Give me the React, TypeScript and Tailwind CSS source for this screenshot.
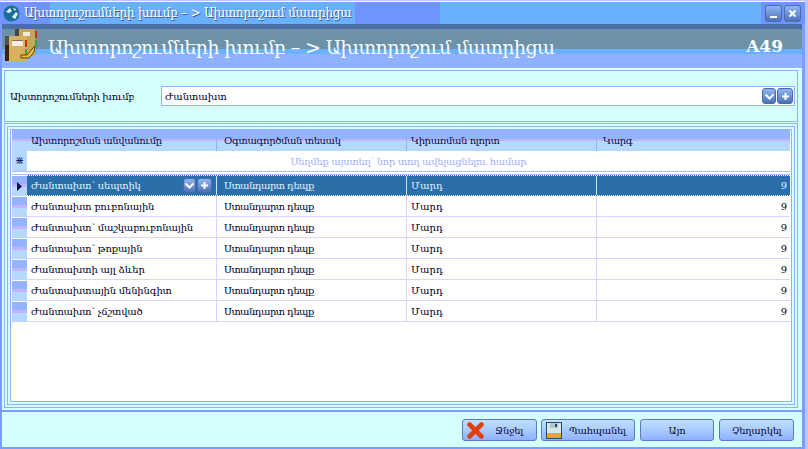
import type { ReactNode } from "react";

const rows = [
  "Ժանտախտ՝ սեպտիկ",
  "Ժանտախտ բուբոնային",
  "Ժանտախտ՝ մաշկաբուբոնային",
  "Ժանտախտ՝ թոքային",
  "Ժանտախտի այլ ձևեր",
  "Ժանտախտային մենինգիտ",
  "Ժանտախտ՝ չճշտված",
];

const headers = [
  { label: "Ախտորոշման անվանումը", cls: "w-[190px] border-r border-r-[#8fb2ff] pl-[4px]" },
  { label: "Օգտագործման տեսակ", cls: "w-[190px] border-r border-r-[#8fb2ff] pl-[7px]" },
  { label: "Կիրառման ոլորտ", cls: "w-[190px] border-r border-r-[#8fb2ff] pl-[4px]" },
  { label: "Կարգ", cls: "flex-1 pl-[6px]" },
];

function GlossButton({ kind, size = "w-[14px] h-[16px]" }: { kind: "down" | "plus" | "min" | "close"; size?: string }) {
  return (
    <span className={`${size} flex items-center justify-center rounded-[3px] border border-[#4a6aa8] bg-[linear-gradient(#8fb4f0,#6f95d8_50%,#4a70b8)]`}>
      <svg width="11" height="11" viewBox="0 0 11 11" fill="none" stroke="#fff" strokeWidth="2">
        {kind === "down" && <path d="M1.5 3.5 5.5 7.5 9.5 3.5" />}
        {kind === "plus" && <path d="M5.5 2v7M2 5.5h7" />}
        {kind === "min" && <path d="M2 9h7" />}
        {kind === "close" && <path d="M2.5 2.5l6 6M8.5 2.5l-6 6" />}
      </svg>
    </span>
  );
}

function FolderIcon() {
  return (
    <svg width="32" height="32" viewBox="0 0 32 32" shapeRendering="crispEdges">
      <rect x="10" y="0" width="20" height="27" fill="#c8a458" />
      <rect x="10" y="0" width="4" height="7" fill="#444450" />
      <rect x="18" y="3" width="7" height="4" fill="#f0e8d8" />
      <rect x="30" y="2" width="2" height="7" fill="#c83010" />
      <rect x="30" y="11" width="2" height="7" fill="#40a040" />
      <rect x="0" y="7" width="22" height="25" fill="#d8b060" />
      <rect x="0" y="7" width="4" height="9" fill="#505058" />
      <rect x="0" y="16" width="4" height="16" fill="#3a2410" />
      <rect x="7" y="11" width="11" height="6" fill="#f8ece0" />
      <rect x="7" y="11" width="11" height="1" fill="#807060" />
      <rect x="20" y="11" width="2" height="7" fill="#c83010" />
      <rect x="20" y="20" width="2" height="7" fill="#40a040" />
      <path d="M16 29h8l5-6 1-6-3 3-5 6h-6z" fill="#e8c030" stroke="#5a4408" strokeWidth="1" shapeRendering="auto" />
    </svg>
  );
}

function FrameBox({ children }: { children: ReactNode }) {
  return <div className="flex min-h-0 flex-1 flex-col border border-[#8fb2ff] p-[2px]">{children}</div>;
}

function FootButton({ width, icon, label, textClass }: { width: string; icon?: ReactNode; label: string; textClass?: string }) {
  return (
    <div className={`${width} flex h-[22px] items-center rounded-[3px] border border-[#5f78c0] bg-[linear-gradient(#c0e0ff,#a8ccff_50%,#8fb0ff)] text-[10px] tracking-[-0.3px] text-[#0a0a40]`}>
      {icon}
      <span className={textClass ?? "flex-1 text-center"}>{label}</span>
    </div>
  );
}

export default function App() {
  return (
    <div className="flex h-[449px] w-[808px] flex-col overflow-hidden bg-[#b9c9ff] font-['DejaVu_Serif',serif]">
      {/* title bar */}
      <div className="mt-[1px] flex h-[23px] w-[805px] items-center border-t border-t-white bg-[linear-gradient(90deg,#6f93ff_50px,#69b0ff_50px,#69b0ff_355px,#6f93ff_355px,#6f93ff_440px,#69b0ff_440px,#69b0ff_761px,#6f93ff_761px)] pr-[4px] pl-[3px]">
        <svg width="17" height="17" viewBox="0 0 17 17">
          <circle cx="8.5" cy="8.5" r="8" fill="#1b6e9a" />
          <path d="M3 7l4-4 2 3-3 2zM9 12l4-5 2 2-3 5zM10 3l3 1-1 2z" fill="#e8f4ff" />
        </svg>
        <span className="ml-[4px] text-[12px] tracking-[-0.2px] whitespace-nowrap text-white [text-shadow:1px_1px_0_#3c5a90]">
          Ախտորոշումների խումբ – &gt; Ախտորոշում մատրիցա
        </span>
        <div className="ml-auto flex gap-[2px]">
          <GlossButton kind="min" size="w-[17px] h-[17px]" />
          <GlossButton kind="close" size="w-[17px] h-[17px]" />
        </div>
      </div>

      <div className="flex min-h-0 w-[805px] flex-1 flex-col border-r-[3px] border-b-[2px] border-l-[2px] border-[#7b9dff]">
        {/* heading band */}
        <div className="flex h-[44px] shrink-0 bg-[linear-gradient(#4a6ea8_5px,#6d92a8_5px,#6d92a8_25px,#69b0ff_25px,#69b0ff_30px,#8fb2ff_30px)] pr-[19px] pl-[3px]">
          <div className="mt-[5px] shrink-0">
            <FolderIcon />
          </div>
          <span className="mt-[9px] ml-[11px] text-[19px] leading-[28px] tracking-[-0.6px] whitespace-nowrap text-[#f8fdff]">
            Ախտորոշումների խումբ – &gt; Ախտորոշում մատրիցա
          </span>
          <span className="mt-[8px] ml-auto text-[17px] leading-[28px] font-bold text-[#f8fdff]">A49</span>
        </div>

        {/* body */}
        <div className="flex min-h-0 flex-1 flex-col bg-[#d5ffff]">
          <div className="flex min-h-0 flex-1 flex-col border-t border-t-white pt-[1px] pr-[4px] pl-[2px]">
            <div className="flex h-[52px] shrink-0 items-center border border-[#8fb2ff] pr-[2px] pl-[5px] text-[10px] text-[#000028]">
              <span className="w-[151px] tracking-[-0.35px] whitespace-nowrap">Ախտորոշումների խումբ</span>
              <div className="flex h-[20px] flex-1 items-center border border-[#8fb2ff] bg-white pr-[1px] pl-[3px]">
                <span>Ժանտախտ</span>
                <div className="ml-auto flex gap-[1px]">
                  <GlossButton kind="down" />
                  <GlossButton kind="plus" size="w-[16px] h-[16px]" />
                </div>
              </div>
            </div>

            <div className="mt-[1px] flex h-[285px] min-h-0 flex-col">
              <FrameBox>
                <FrameBox>
                  <div className="flex min-h-0 flex-1 flex-col border border-[#8fb2ff] bg-white px-[1px] pb-[1px]">
                    {/* header */}
                    <div className="flex h-[21px] shrink-0 text-[10px] tracking-[-0.4px] whitespace-nowrap text-[#0c0c44]">
                      <div className="w-[15px] bg-[linear-gradient(#94b4ff_9px,#c0b4ff_9px,#c0b4ff_11px,#b4d8ff_11px)]" />
                      {headers.map((h) => (
                        <div
                          key={h.label}
                          className={`${h.cls} flex items-center bg-[linear-gradient(#94b4ff_9px,#c0b4ff_9px,#c0b4ff_11px,#b4d8ff_11px)]`}
                        >
                          {h.label}
                        </div>
                      ))}
                    </div>
                    {/* new row */}
                    <div className="flex h-[21px] shrink-0 border-b border-b-[#a8c4ff]">
                      <div className="flex w-[15px] items-center justify-center bg-[#b4d8ff] text-[11px] text-[#10186c]">⋇</div>
                      <div className="flex flex-1 items-center justify-center text-[10px] tracking-[-0.3px] whitespace-nowrap text-[#a4b0ff]">
                        Սեղմեք այստեղ՝ նոր տող ավելացնելու համար
                      </div>
                    </div>
                    <div className="h-[3px] shrink-0 border-b border-b-[#a8c4ff]" />

                    {rows.map((r, i) => (
                      <div key={r} className="flex h-[21px] shrink-0">
                        <div className="flex w-[15px] items-center justify-center border-t border-t-white bg-[linear-gradient(#94b4ff_8px,#c0b4ff_8px,#c0b4ff_11px,#b4d8ff_11px)]">
                          {i === 0 && (
                            <svg width="5" height="9" viewBox="0 0 5 9">
                              <path d="M0 0l5 4.5L0 9z" fill="#0a1050" />
                            </svg>
                          )}
                        </div>
                        <div
                          className={`flex flex-1 text-[10px] whitespace-nowrap ${i === 0 ? "border-y border-dotted border-white bg-[#2a6eaa] text-[#e0f2ff]" : "border-b border-b-[#d8d4ff] bg-white text-[#000028]"}`}
                        >
                          <div className={`flex w-[190px] items-center border-r pr-[4px] pl-[4px] tracking-[-0.2px] ${i === 0 ? "border-r-[#d0e4ff]" : "border-r-[#d8d4ff]"}`}>
                            <span>{r}</span>
                            {i === 0 && (
                              <div className="ml-auto flex gap-[1px]">
                                <GlossButton kind="down" size="w-[13px] h-[15px]" />
                                <GlossButton kind="plus" size="w-[15px] h-[15px]" />
                              </div>
                            )}
                          </div>
                          <div className={`flex w-[190px] items-center border-r pl-[7px] tracking-[-0.6px] ${i === 0 ? "border-r-[#d0e4ff]" : "border-r-[#d8d4ff]"}`}>Ստանդարտ դեպք</div>
                          <div className={`flex w-[190px] items-center border-r pl-[4px] ${i === 0 ? "border-r-[#d0e4ff]" : "border-r-[#d8d4ff]"}`}>Մարդ</div>
                          <div className="flex flex-1 items-center justify-end pr-[3px]">9</div>
                        </div>
                      </div>
                    ))}
                  </div>
                </FrameBox>
              </FrameBox>
            </div>
          </div>

          {/* footer */}
          <div className="flex h-[37px] shrink-0 items-center justify-end gap-[5px] border-t-[2px] border-t-[#7b9dff] pt-[1px] pr-[8px]">
            <FootButton
              width="w-[75px] mr-[-1px]"
              label="Ջնջել"
              textClass="ml-[11px]"
              icon={
                <svg className="ml-[4px]" width="17" height="17" viewBox="0 0 16 16">
                  <path d="M2.5 2.5l11 11M13.5 2.5l-11 11" stroke="#e04010" strokeWidth="4.5" strokeLinecap="round" />
                </svg>
              }
            />
            <FootButton
              width="w-[94px]"
              label="Պահպանել"
              textClass="ml-[7px]"
              icon={
                <svg className="ml-[4px]" width="16" height="17" viewBox="0 0 16 17" shapeRendering="crispEdges">
                  <rect x="0.5" y="0.5" width="15" height="16" fill="#d8e8e8" stroke="#205060" />
                  <rect x="4" y="1" width="8" height="5" fill="#b0c8d0" />
                  <rect x="9" y="2" width="2" height="3" fill="#205060" />
                  <rect x="1" y="11" width="14" height="5" fill="#f0a030" />
                </svg>
              }
            />
            <FootButton width="w-[74px]" label="Այո" />
            <FootButton width="w-[75px]" label="Չեղարկել" />
          </div>
        </div>
      </div>
    </div>
  );
}
